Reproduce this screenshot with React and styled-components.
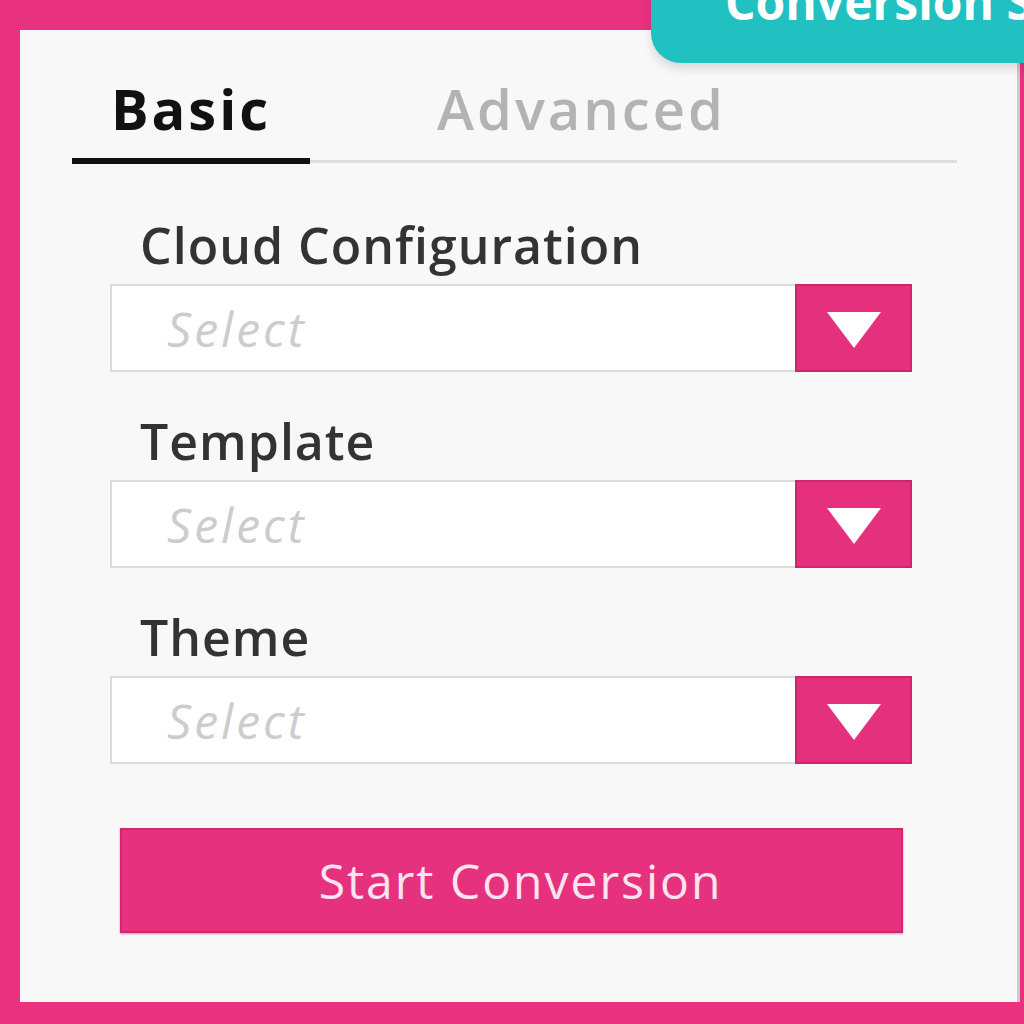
import React, { useState } from 'react';
import styled, { createGlobalStyle } from 'styled-components';

const GlobalStyle = createGlobalStyle`
    html, body {
        margin: 0;
        padding: 0;
        background: #e8327f;
        font-family: 'Open Sans', 'Noto Sans', sans-serif;
    }
    * {
        box-sizing: border-box;
    }
`;

const fields = ['Cloud Configuration', 'Template', 'Theme'];

const App = () => {
    const [tab, setTab] = useState('basic');

    return (
        <>
            <GlobalStyle />
            <Page>
                <Panel>
                    <ConversionTab>Conversion Settings</ConversionTab>
                    <Tabs>
                        <Tab $active={tab === 'basic'} onClick={() => setTab('basic')}>Basic</Tab>
                        <Tab $active={tab === 'advanced'} $wide onClick={() => setTab('advanced')}>Advanced</Tab>
                    </Tabs>
                    <Form>
                        {fields.map((name) => (
                            <Field key={name}>
                                <Label>{name}</Label>
                                <SelectBox>
                                    <Placeholder>Select</Placeholder>
                                    <Arrow>
                                        <svg width="58" height="40" viewBox="0 0 58 40">
                                            <polygon points="2,4 56,4 29,40" fill="#ffffff" />
                                        </svg>
                                    </Arrow>
                                </SelectBox>
                            </Field>
                        ))}
                        <StartButton>Start Conversion</StartButton>
                    </Form>
                </Panel>
            </Page>
        </>
    );
};

const Page = styled.div`
    width: 1024px;
    height: 1024px;
    padding: 30px 4px 22px 20px;
    overflow: hidden;
`;

const Panel = styled.div`
    position: relative;
    height: 100%;
    background: #f8f8f8;
    border-right: 3px solid #cfc6cb;
    padding: 50px 60px 0 52px;
`;

const ConversionTab = styled.div`
    position: absolute;
    top: -66px;
    left: 631px;
    width: 420px;
    height: 99px;
    background: #22c1c1;
    border-radius: 0 0 0 30px;
    box-shadow: 0 6px 10px rgba(0, 0, 0, 0.12);
    color: #ffffff;
    font-size: 48px;
    font-weight: 700;
    line-height: 1;
    padding: 14px 0 0 74px;
    white-space: nowrap;
    overflow: hidden;
`;

const Tabs = styled.div`
    display: flex;
    border-bottom: 3px solid #dddddd;
`;

const Tab = styled.button`
    width: ${(p) => (p.$wide ? 'auto' : '238px')};
    padding: ${(p) => (p.$wide ? '0 0 0 127px' : '0')};
    margin-bottom: -4px;
    height: 84px;
    display: flex;
    align-items: flex-start;
    justify-content: ${(p) => (p.$wide ? 'flex-start' : 'center')};
    background: transparent;
    border: none;
    border-bottom: 6px solid ${(p) => (p.$active ? '#111111' : 'transparent')};
    font-family: inherit;
    font-size: 56px;
    letter-spacing: 3px;
    font-weight: ${(p) => (p.$active ? 700 : 600)};
    color: ${(p) => (p.$active ? '#111111' : '#b3b3b3')};
    line-height: 1;
    cursor: pointer;
`;

const Form = styled.div`
    display: flex;
    flex-direction: column;
    gap: 44px;
    padding: 57px 0 0 38px;
    width: 840px;
`;

const Field = styled.div`
    display: flex;
    flex-direction: column;
`;

const Label = styled.div`
    padding-left: 30px;
    height: 64px;
    font-size: 50px;
    letter-spacing: 1px;
    font-weight: 600;
    color: #333333;
    line-height: 1;
`;

const SelectBox = styled.div`
    display: flex;
    align-items: stretch;
    height: 88px;
    background: #ffffff;
    border: 2px solid #dcdcdc;
    width: 802px;
`;

const Placeholder = styled.div`
    flex: 1;
    display: flex;
    align-items: center;
    padding-left: 55px;
    font-size: 48px;
    letter-spacing: 3px;
    font-style: italic;
    color: #cccccc;
`;

const Arrow = styled.div`
    width: 117px;
    margin: -2px -2px -2px 0;
    background: #e5317d;
    box-shadow: inset 0 0 0 2px rgba(160, 20, 75, 0.35);
    display: flex;
    align-items: center;
    justify-content: center;
`;

const StartButton = styled.button`
    margin: 20px 0 0 10px;
    width: 783px;
    height: 105px;
    padding: 0 0 0 18px;
    background: #e6327e;
    border: none;
    box-shadow: inset 0 0 0 2px rgba(160, 20, 75, 0.3), 0 1px 2px rgba(120, 20, 60, 0.4);
    color: #fbe3ef;
    font-family: inherit;
    font-size: 48px;
    letter-spacing: 2px;
    cursor: pointer;
`;

export default App;
